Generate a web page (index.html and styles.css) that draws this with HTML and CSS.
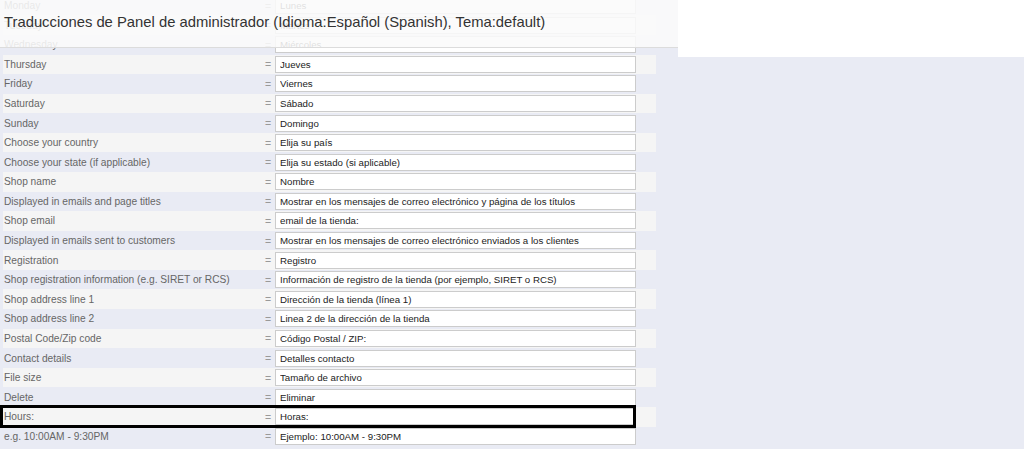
FILE: index.html
```html
<!DOCTYPE html>
<html lang="es">
<head>
<meta charset="utf-8">
<title>Traducciones</title>
<link rel="stylesheet" href="styles.css">
</head>
<body>
<div class="page">
  <div class="rows">
    <div class="row"><span class="label">Monday</span><span class="eq">=</span><input class="field" value="Lunes"></div>
    <div class="row"><span class="label">Tuesday</span><span class="eq">=</span><input class="field" value="Martes"></div>
    <div class="row"><span class="label">Wednesday</span><span class="eq">=</span><input class="field" value="Miércoles"></div>
    <div class="row"><span class="label">Thursday</span><span class="eq">=</span><input class="field" value="Jueves"></div>
    <div class="row"><span class="label">Friday</span><span class="eq">=</span><input class="field" value="Viernes"></div>
    <div class="row"><span class="label">Saturday</span><span class="eq">=</span><input class="field" value="Sábado"></div>
    <div class="row"><span class="label">Sunday</span><span class="eq">=</span><input class="field" value="Domingo"></div>
    <div class="row"><span class="label">Choose your country</span><span class="eq">=</span><input class="field" value="Elija su país"></div>
    <div class="row"><span class="label">Choose your state (if applicable)</span><span class="eq">=</span><input class="field" value="Elija su estado (si aplicable)"></div>
    <div class="row"><span class="label">Shop name</span><span class="eq">=</span><input class="field" value="Nombre"></div>
    <div class="row"><span class="label">Displayed in emails and page titles</span><span class="eq">=</span><input class="field" value="Mostrar en los mensajes de correo electrónico y página de los títulos"></div>
    <div class="row"><span class="label">Shop email</span><span class="eq">=</span><input class="field" value="email de la tienda:"></div>
    <div class="row"><span class="label">Displayed in emails sent to customers</span><span class="eq">=</span><input class="field" value="Mostrar en los mensajes de correo electrónico enviados a los clientes"></div>
    <div class="row"><span class="label">Registration</span><span class="eq">=</span><input class="field" value="Registro"></div>
    <div class="row"><span class="label">Shop registration information (e.g. SIRET or RCS)</span><span class="eq">=</span><input class="field" value="Información de registro de la tienda (por ejemplo, SIRET o RCS)"></div>
    <div class="row"><span class="label">Shop address line 1</span><span class="eq">=</span><input class="field" value="Dirección de la tienda (línea 1)"></div>
    <div class="row"><span class="label">Shop address line 2</span><span class="eq">=</span><input class="field" value="Linea 2 de la dirección de la tienda"></div>
    <div class="row"><span class="label">Postal Code/Zip code</span><span class="eq">=</span><input class="field" value="Código Postal / ZIP:"></div>
    <div class="row"><span class="label">Contact details</span><span class="eq">=</span><input class="field" value="Detalles contacto"></div>
    <div class="row"><span class="label">File size</span><span class="eq">=</span><input class="field" value="Tamaño de archivo"></div>
    <div class="row"><span class="label">Delete</span><span class="eq">=</span><input class="field" value="Eliminar"></div>
    <div class="row highlight"><span class="label">Hours:</span><span class="eq">=</span><input class="field" value="Horas:"></div>
    <div class="row"><span class="label">e.g. 10:00AM - 9:30PM</span><span class="eq">=</span><input class="field" value="Ejemplo: 10:00AM - 9:30PM"></div>
  </div>
  <div class="title-bar"><h1 class="title">Traducciones de Panel de administrador (Idioma:Español (Spanish), Tema:default)</h1></div>
  <div class="corner"></div>
</div>
</body>
</html>
```
FILE: styles.css
```css
html, body {
  margin: 0;
  padding: 0;
}
body {
  background: #e9ebf4;
  font-family: "Liberation Sans", Arial, sans-serif;
  overflow: hidden;
}
.page {
  position: relative;
  width: 1024px;
  height: 449px;
  overflow: hidden;
}
.rows {
  margin-top: -4.2px;
  margin-left: 3px;
  width: 653px;
  display: flex;
  flex-direction: column;
}
.row {
  position: relative;
  height: 19.58px;
  display: grid;
  grid-template-columns: 262px 10px 361px;
  align-items: center;
}
.row:nth-child(even) {
  background: #f5f5f5;
}
.row:nth-child(odd) {
  background: transparent;
}
.label {
  padding-left: 1px;
  font-size: 10.2px;
  color: #666;
  white-space: nowrap;
}
.eq {
  font-size: 10.5px;
  color: #999;
}
.field {
  box-sizing: border-box;
  width: 361px;
  height: 17px;
  margin: 0;
  padding: 0 4px;
  border: 1px solid #ccc;
  background: #fff;
  font-family: "Liberation Sans", Arial, sans-serif;
  font-size: 9.7px;
  color: #222;
  outline: none;
}
.highlight::after {
  content: "";
  position: absolute;
  left: -3px;
  top: -2px;
  width: 636px;
  height: 23px;
  box-sizing: border-box;
  border: 3px solid #000;
  pointer-events: none;
}
.title-bar {
  position: absolute;
  left: 0;
  top: 0;
  width: 678px;
  height: 47px;
  background: rgba(250, 250, 250, 0.88);
  border-bottom: 1px solid #dcdcdc;
  display: flex;
  align-items: center;
}
.title {
  margin: 0 0 4px 4px;
  font-size: 14.8px;
  font-weight: normal;
  color: #333;
  white-space: nowrap;
}
.corner {
  position: absolute;
  left: 678px;
  top: 0;
  width: 346px;
  height: 57px;
  background: #fff;
}
```
